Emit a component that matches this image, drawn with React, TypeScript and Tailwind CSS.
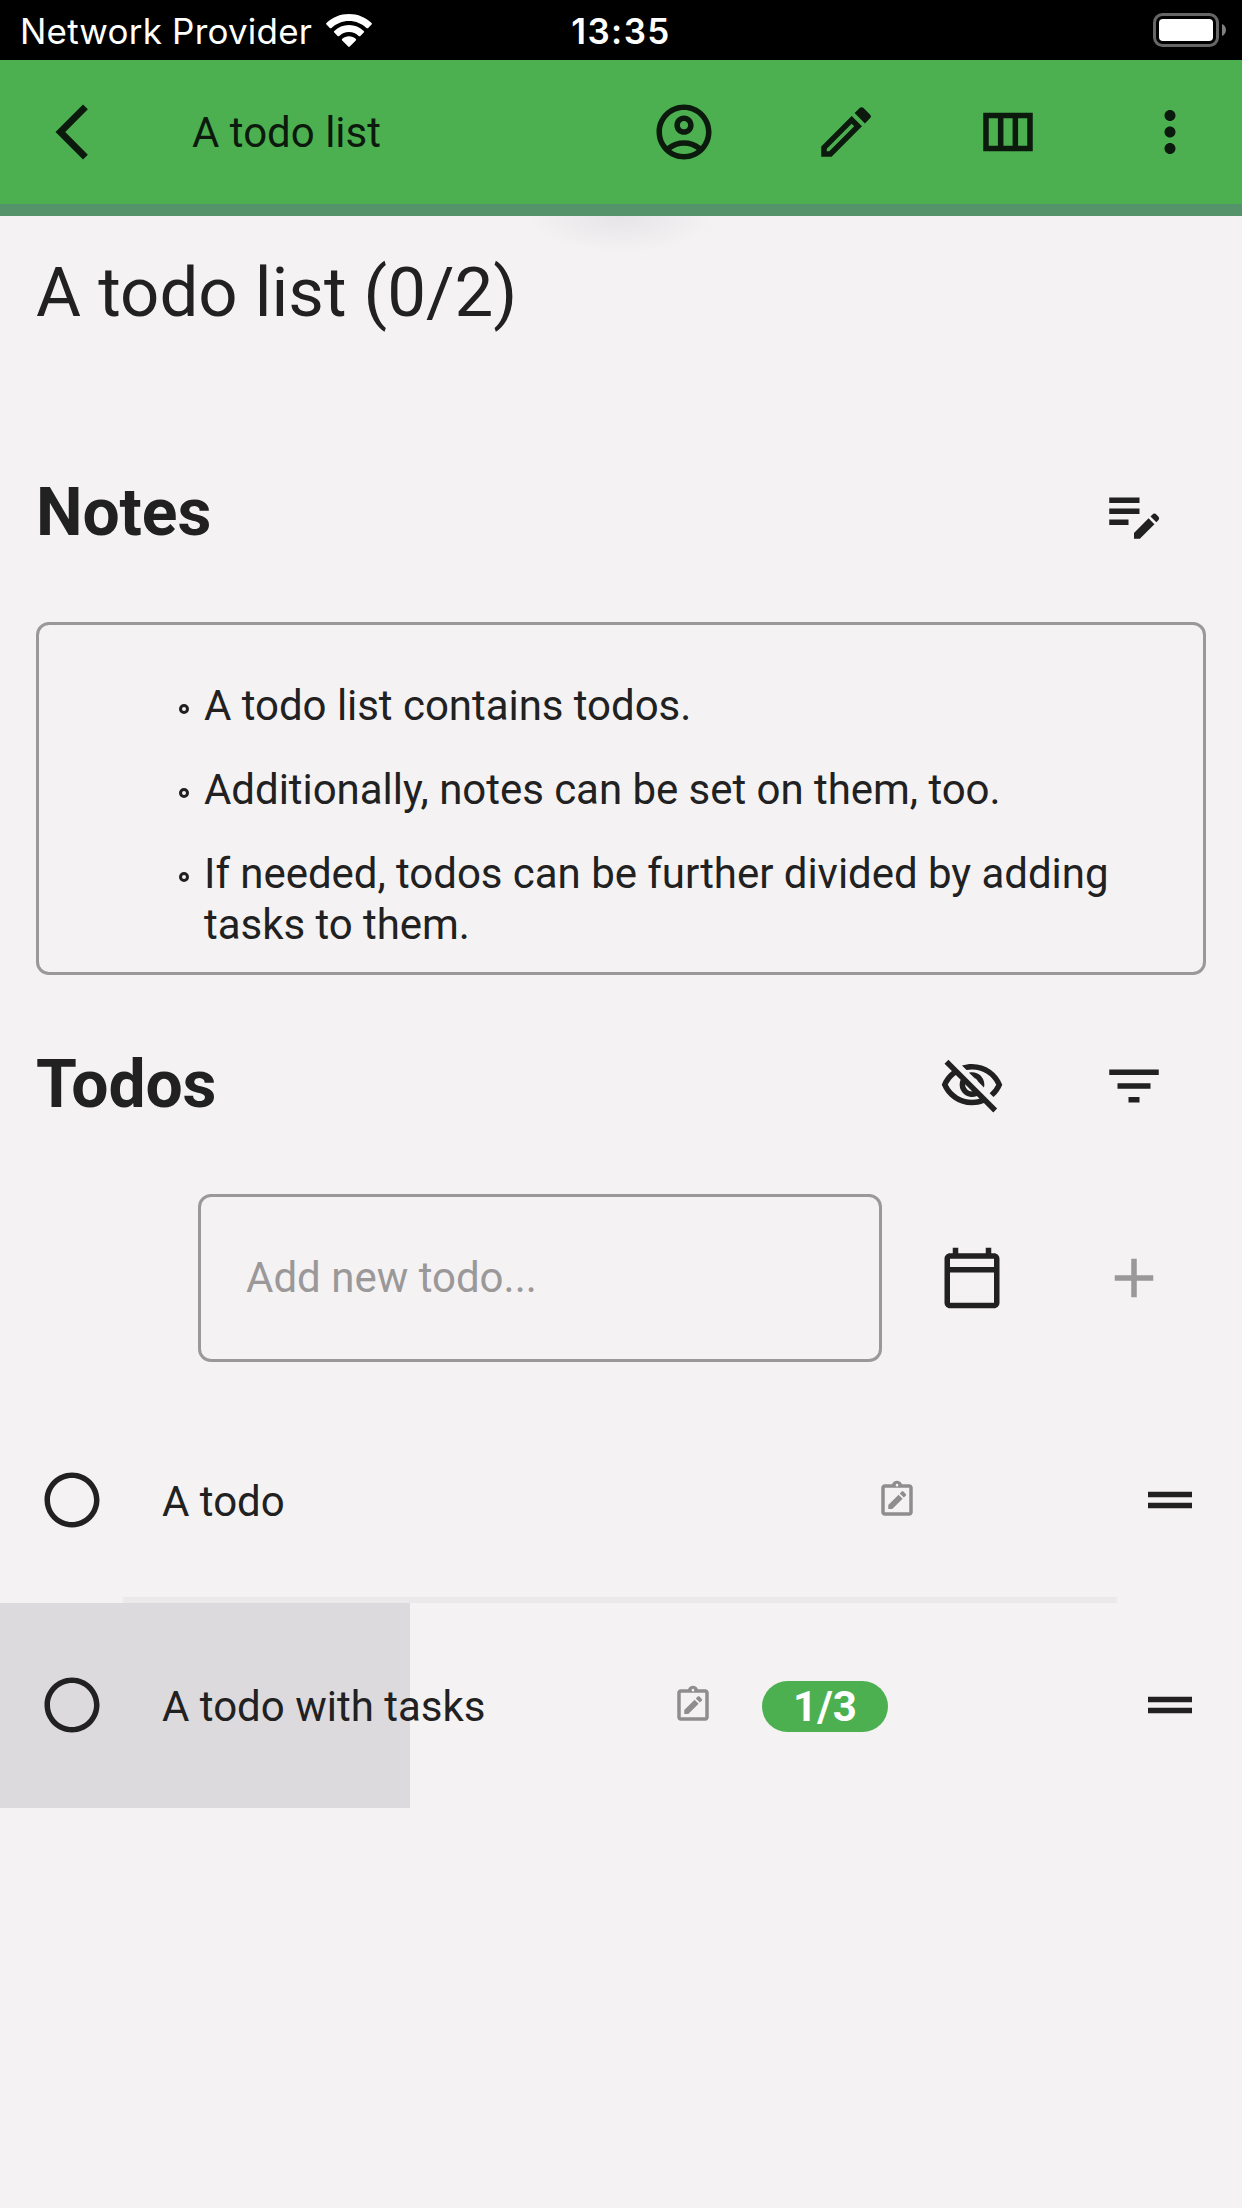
import type { ReactNode } from 'react';
import {
  MdAdd,
  MdArrowBackIosNew,
  MdDragHandle,
  MdEditNote,
  MdFilterList,
  MdMoreVert,
  MdOutlineAccountCircle,
  MdOutlineCalendarToday,
  MdOutlineEdit,
  MdOutlineViewColumn,
  MdOutlineVisibilityOff,
  MdRadioButtonUnchecked
} from 'react-icons/md';

const notes = [
  'A todo list contains todos.',
  'Additionally, notes can be set on them, too.',
  'If needed, todos can be further divided by adding tasks to them.'
];

const todos = [
  { id: 1, title: 'A todo', done: 0, total: 0 },
  { id: 2, title: 'A todo with tasks', done: 1, total: 3 }
];

const WifiIcon = () => (
  <svg width="46" height="33" viewBox="0 0 46 33" fill="white">
    <path d="M23 0C14.200 0 6.200 3.400.500 8.900c-.6.600-.6 1.100 0 1.700l3.300 3.300c.5.500 1.100.5 1.700 0C10 9.600 16.200 6.900 23 6.900s13 2.700 17.500 7c.6.500 1.200.5 1.700 0l3.300-3.300c.6-.6.6-1.100 0-1.700C39.800 3.400 31.800 0 23 0z" />
    <path d="M23 11.100c-5.700 0-10.900 2.200-14.700 5.800-.6.500-.6 1.100 0 1.700l3.300 3.300c.5.500 1.100.5 1.700 0 2.500-2.400 5.900-3.900 9.700-3.900s7.200 1.500 9.700 3.900c.6.500 1.200.5 1.700 0l3.300-3.300c.6-.6.6-1.200 0-1.700-3.800-3.600-9-5.800-14.700-5.800z" />
    <path d="M23 22.200c-2.600 0-5 1-6.700 2.600-.6.600-.6 1.100-.1 1.700l6 6c.5.500 1.100.5 1.600 0l6-6c.5-.6.5-1.100-.1-1.700-1.700-1.600-4.100-2.600-6.700-2.600z" />
  </svg>
);

const BatteryIcon = () => (
  <svg width="74" height="34" viewBox="0 0 74 34">
    <rect x="1.5" y="1.5" width="63" height="31" rx="8" fill="none" stroke="#666" strokeWidth="3" />
    <rect x="6" y="6" width="54" height="22" rx="4" fill="white" />
    <path d="M69 11c5.300 2 5.300 10 0 12z" fill="#808080" />
  </svg>
);

const NoteIcon = () => (
  <svg className="-mt-[2px] size-[42px] text-[#8f8d8e]" viewBox="0 0 24 24" fill="currentColor">
    <path
      fillRule="evenodd"
      d="M5 3h4.180C9.600 1.840 10.700 1 12 1s2.400.84 2.820 2H19c1.100 0 2 .9 2 2v14c0 1.100-.9 2-2 2H5c-1.100 0-2-.9-2-2V5c0-1.100.9-2 2-2zm0 2v14h14V5zm7-2.250a.75.75 0 1 0 0 1.500.75.75 0 0 0 0-1.500z"
    />
    <path d="M7 17.200v-2.300l5.900-5.900 2.300 2.300-5.900 5.900zM13.600 8.300l1.100-1.100c.3-.3.700-.3 1 0l1.300 1.300c.3.3.3.700 0 1l-1.100 1.100z" />
  </svg>
);

const IconButton = ({ children }: { children: ReactNode }) => (
  <button className="flex size-36 shrink-0 items-center justify-center text-[66px]">{children}</button>
);

const StatusBar = () => (
  <div className="grid h-[60px] grid-cols-3 items-center bg-black font-[Inter,sans-serif] text-[35px] text-white">
    <div className="flex items-center gap-[14px] pl-5">
      <span className="pt-[2px] tracking-[0.2px] whitespace-nowrap">Network Provider</span>
      <WifiIcon />
    </div>
    <span className="pt-[2px] text-center font-semibold tracking-[1.4px]">13:35</span>
    <div className="flex justify-end pr-[15px]">
      <BatteryIcon />
    </div>
  </div>
);

const ToolBar = () => (
  <header className="bg-[#4db050] text-[#0b1a0c]">
    <div className="flex h-36 items-center gap-[18px]">
      <IconButton><MdArrowBackIosNew /></IconButton>
      <h1 className="flex-1 pl-[30px] text-[42px]">A todo list</h1>
      <IconButton><MdOutlineAccountCircle /></IconButton>
      <IconButton><MdOutlineEdit /></IconButton>
      <IconButton><MdOutlineViewColumn /></IconButton>
      <IconButton><MdMoreVert /></IconButton>
    </div>
    <div className="h-3 bg-[#55936b]" />
  </header>
);

const SectionHeader = ({ title, children }: { title: string; children: ReactNode }) => (
  <div className="flex items-center gap-[18px] px-9">
    <h3 className="flex-1 pb-[2px] text-[66px] leading-[78px] font-bold tracking-[-0.1px]">{title}</h3>
    {children}
  </div>
);

interface TodoRowProps {
  title: string;
  done: number;
  total: number;
  separator: boolean;
}

const TodoRow = ({ title, done, total, separator }: TodoRowProps) => (
  <li className="relative flex h-[205px] items-center">
    {total > 0 && (
      <div
        className="absolute inset-y-0 left-0 bg-[#dcdadd]"
        style={{ width: `${(done / total) * 99}%` }}
      />
    )}
    <div className="relative flex flex-1 items-center">
      <button className="-mt-[2px] flex w-36 justify-center text-[66px]">
        <MdRadioButtonUnchecked />
      </button>
      <span className="flex-1 pt-px pl-[18px] text-[42px]">{title}</span>
      <NoteIcon />
      {total > 0 && (
        <span className="mt-px ml-12 h-[51px] w-[126px] rounded-full bg-[#4db050] text-center text-[42px] leading-[51px] font-bold text-white">
          {done}/{total}
        </span>
      )}
      <div className={total > 0 ? 'w-[210px]' : 'w-[180px]'} />
      <button className="-mt-[2px] flex w-36 justify-center text-[66px]">
        <MdDragHandle />
      </button>
    </div>
    {separator && (
      <div className="absolute bottom-0 left-[123px] h-[6px] w-[994px] bg-[#ebe9ea]" />
    )}
  </li>
);

const App = () => {
  return (
    <div className="min-h-[2208px] w-[1242px] bg-[#f4f2f3] font-[Roboto,sans-serif] text-[#212121]">
      <StatusBar />
      <ToolBar />
      <main className="relative">
        <div className="absolute top-0 left-1/2 h-[36px] w-[200px] -translate-x-1/2 bg-[radial-gradient(94px_36px_at_50%_0,#e6e4e6,#f4f2f3)]" />

        <h2 className="relative px-9 pt-9 text-[69px] leading-[81px]">A todo list (0/2)</h2>

        <section className="pt-[109px]">
          <SectionHeader title="Notes">
            <IconButton><MdEditNote /></IconButton>
          </SectionHeader>
          <div className="mx-9 mt-9 h-[353px] rounded-[13px] border-[3px] border-[#9a9899] pt-[55px] pr-[60px] pl-[165px]">
            <ul className="flex flex-col gap-[33px] text-[42px] leading-[51px] tracking-[-0.04px]">
              {notes.map((note) => (
                <li key={note} className="relative">
                  <span className="absolute top-[24px] -left-[25px] size-[10px] rounded-full border-[3px] border-current" />
                  {note}
                </li>
              ))}
            </ul>
          </div>
        </section>

        <section className="pt-[39px]">
          <SectionHeader title="Todos">
            <IconButton><MdOutlineVisibilityOff /></IconButton>
            <IconButton><MdFilterList /></IconButton>
          </SectionHeader>
          <div className="flex items-center gap-[18px] pt-9 pr-9 pl-[198px]">
            <input
              className="h-[168px] min-w-0 flex-1 rounded-[13px] border-[3px] border-[#9a9899] px-[45px] pb-[2px] text-[42px] placeholder:text-[#9a9899]"
              placeholder="Add new todo..."
            />
            <IconButton><MdOutlineCalendarToday /></IconButton>
            <span className="text-[#9a9899]">
              <IconButton><MdAdd /></IconButton>
            </span>
          </div>
          <ul className="pt-9">
            {todos.map((todo, index) => (
              <TodoRow
                key={todo.id}
                title={todo.title}
                done={todo.done}
                total={todo.total}
                separator={index < todos.length - 1}
              />
            ))}
          </ul>
        </section>
      </main>
    </div>
  );
};

export default App;
